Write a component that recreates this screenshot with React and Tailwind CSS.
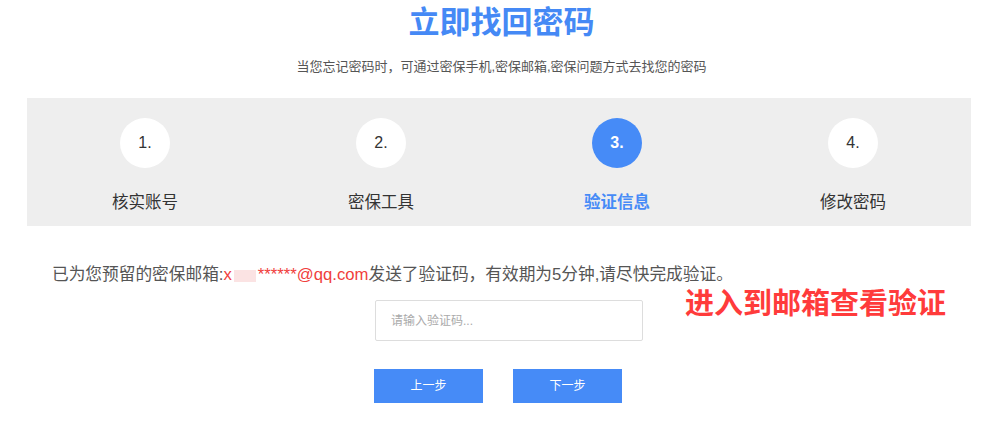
import React from 'react';

const steps = [
  { n: '1.', label: '核实账号' },
  { n: '2.', label: '密保工具' },
  { n: '3.', label: '验证信息', active: true },
  { n: '4.', label: '修改密码' },
];

function Step({ n, label, active }) {
  return (
    <div className="flex flex-col items-center pt-[20px]">
      <div
        className={
          active
            ? 'w-[50px] h-[50px] rounded-full bg-[#468bf7] text-white font-bold text-[16px] flex items-center justify-center'
            : 'w-[50px] h-[50px] rounded-full bg-white text-[#333] text-[16px] flex items-center justify-center'
        }
      >
        {n}
      </div>
      <div
        className={
          active
            ? 'mt-[22px] leading-[24px] text-[16.5px] font-bold text-[#468bf7]'
            : 'mt-[22px] leading-[24px] text-[16.5px] text-[#333]'
        }
      >
        {label}
      </div>
    </div>
  );
}

export default function App() {
  return (
    <div
      className="relative w-[1003px] h-[428px] bg-white overflow-hidden"
      style={{ fontFamily: '"Liberation Sans", "Noto Sans CJK SC", sans-serif' }}
    >
      <h1 className="pt-[1px] text-center text-[31px] font-bold leading-[44px] text-[#4589f5]">立即找回密码</h1>
      <p className="mt-[12px] text-center text-[13px] leading-[20px] text-[#555]">
        当您忘记密码时，可通过密保手机,密保邮箱,密保问题方式去找您的密码
      </p>

      <div className="mt-[21px] ml-[27px] w-[944px] h-[128px] bg-[#eeeeee] grid grid-cols-4">
        {steps.map((s) => (
          <Step key={s.n} {...s} />
        ))}
      </div>

      <p className="mt-[37px] pl-[52px] text-[16.7px] leading-[24px] text-[#555]">
        已为您预留的密保邮箱:
        <span className="text-[#f0403c]">x</span>
        <span className="inline-block w-[22px] h-[12px] bg-[#fbe3e3] align-middle mx-[2px]"></span>
        <span className="text-[#f0403c]">******@qq.com</span>
        发送了验证码，有效期为5分钟,请尽快完成验证。
      </p>

      <div className="mt-[13px] ml-[375px] w-[268px] h-[41px] border border-[#dddddd] rounded-[2px] flex items-center pl-[15px] text-[12px] text-[#aaa]">
        请输入验证码...
      </div>

      <div className="mt-[28px] ml-[374px] flex gap-[30px]">
        <button className="w-[109px] h-[34px] bg-[#468bf7] text-white text-[12px]">上一步</button>
        <button className="w-[109px] h-[34px] bg-[#468bf7] text-white text-[12px]">下一步</button>
      </div>

      <div className="absolute left-[685px] top-[286px] text-[29px] leading-[36px] font-bold text-[#ff3b3b]">
        进入到邮箱查看验证
      </div>
    </div>
  );
}
